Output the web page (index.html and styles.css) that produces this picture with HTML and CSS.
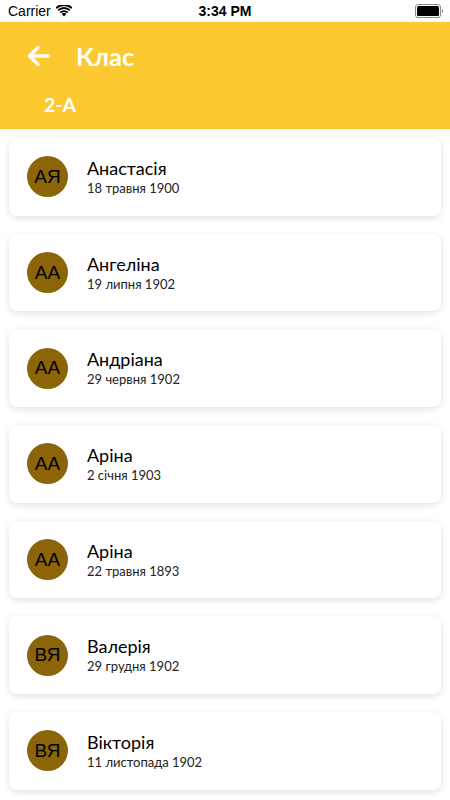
FILE: index.html
```html
<!DOCTYPE html>
<html lang="uk">
<head>
    <meta charset="UTF-8">
    <meta name="viewport" content="width=device-width, initial-scale=1.0">
    <title>Клас</title>
    <link rel="stylesheet" href="styles.css">
</head>
<body>
    <div class="statusbar">
        <div class="carrier">
            Carrier
            <svg class="wifi" width="16" height="12" viewBox="0 0 16 12">
                <path d="M8 11.5 L5.6 8.9 A3.6 3.6 0 0 1 10.4 8.9 Z" fill="#000"/>
                <path d="M3.6 6.9 A6.6 6.6 0 0 1 12.4 6.9 L11.1 8.3 A4.7 4.7 0 0 0 4.9 8.3 Z" fill="#000"/>
                <path d="M1.5 4.6 A9.6 9.6 0 0 1 14.5 4.6 L13.2 6 A7.7 7.7 0 0 0 2.8 6 Z" fill="#000"/>
                <path d="M-0.5 2.4 A12.5 12.5 0 0 1 16.5 2.4 L15.2 3.8 A10.6 10.6 0 0 0 0.8 3.8 Z" fill="#000"/>
            </svg>
        </div>
        <div class="time">3:34 PM</div>
        <div class="battery">
            <span class="battery-body"><span class="battery-fill"></span></span>
            <span class="battery-cap"></span>
        </div>
    </div>

    <header class="appbar">
        <div class="appbar-top">
            <svg class="back" width="24" height="22" viewBox="0 0 24 22">
                <path d="M22 11 H4 M12 2.5 L3.5 11 L12 19.5" fill="none" stroke="#fff" stroke-width="3.4" stroke-linecap="round" stroke-linejoin="round"/>
            </svg>
            <h1>Клас</h1>
        </div>
        <div class="subtitle">2-А</div>
    </header>

    <main class="list">
        <div class="card">
            <div class="avatar">АЯ</div>
            <div class="info">
                <div class="name">Анастасія</div>
                <div class="date">18 травня 1900</div>
            </div>
        </div>
        <div class="card">
            <div class="avatar">АА</div>
            <div class="info">
                <div class="name">Ангеліна</div>
                <div class="date">19 липня 1902</div>
            </div>
        </div>
        <div class="card">
            <div class="avatar">АА</div>
            <div class="info">
                <div class="name">Андріана</div>
                <div class="date">29 червня 1902</div>
            </div>
        </div>
        <div class="card">
            <div class="avatar">АА</div>
            <div class="info">
                <div class="name">Аріна</div>
                <div class="date">2 січня 1903</div>
            </div>
        </div>
        <div class="card">
            <div class="avatar">АА</div>
            <div class="info">
                <div class="name">Аріна</div>
                <div class="date">22 травня 1893</div>
            </div>
        </div>
        <div class="card">
            <div class="avatar">ВЯ</div>
            <div class="info">
                <div class="name">Валерія</div>
                <div class="date">29 грудня 1902</div>
            </div>
        </div>
        <div class="card">
            <div class="avatar">ВЯ</div>
            <div class="info">
                <div class="name">Вікторія</div>
                <div class="date">11 листопада 1902</div>
            </div>
        </div>
    </main>
</body>
</html>
```

FILE: styles.css
```css
/* Загальні стилі */
body {
    margin: 0;
    font-family: 'Lato', 'Noto Sans', sans-serif;
    background-color: #ffffff;
    color: #000;
    width: 450px;
    height: 800px;
    overflow: hidden;
}

.statusbar {
    height: 22px;
    display: flex;
    align-items: center;
    justify-content: space-between;
    padding: 0 7px 0 8px;
    font-family: 'Liberation Sans', Arial, sans-serif;
    font-size: 14px;
    position: relative;
}

.carrier {
    display: flex;
    align-items: center;
    gap: 5px;
}

.time {
    position: absolute;
    left: 0;
    right: 0;
    text-align: center;
    font-weight: 600;
}

.battery {
    display: flex;
    align-items: center;
}

.battery-body {
    width: 22px;
    height: 10px;
    border: 1px solid #888;
    border-radius: 3px;
    padding: 1px;
    box-sizing: content-box;
    display: flex;
}

.battery-fill {
    flex: 1;
    background-color: #000;
    border-radius: 1.5px;
}

.battery-cap {
    width: 1.5px;
    height: 4px;
    background-color: #888;
    margin-left: 1px;
    border-radius: 0 1px 1px 0;
}

.appbar {
    background-color: #fcc930;
    color: #fff;
    height: 107px;
    box-sizing: border-box;
    padding: 18px 0 0 26px;
}

.appbar-top {
    display: flex;
    align-items: center;
    height: 32px;
}

.back {
    display: block;
    margin-right: 26px;
}

h1 {
    margin: 0;
    font-size: 25.5px;
    font-weight: 700;
}

.subtitle {
    font-size: 19.5px;
    font-weight: 700;
    margin: 21px 0 0 18px;
}

.list {
    padding: 9px 9px;
}

.card {
    background-color: #fff;
    border-radius: 8px;
    box-shadow: 0 2px 7px rgba(0, 0, 0, 0.12);
    height: 77.7px;
    margin-bottom: 18px;
    display: flex;
    align-items: center;
    padding-left: 18px;
    box-sizing: border-box;
}

.avatar {
    width: 41px;
    height: 41px;
    border-radius: 50%;
    background-color: #8b6508;
    color: #000;
    display: flex;
    align-items: center;
    justify-content: center;
    font-family: 'Liberation Sans', Arial, sans-serif;
    font-size: 19px;
    margin-right: 19px;
    flex-shrink: 0;
}

.name {
    font-size: 18px;
    line-height: 20px;
}

.date {
    font-size: 13px;
    line-height: 16px;
    margin-top: 2px;
    color: #222;
}
```
